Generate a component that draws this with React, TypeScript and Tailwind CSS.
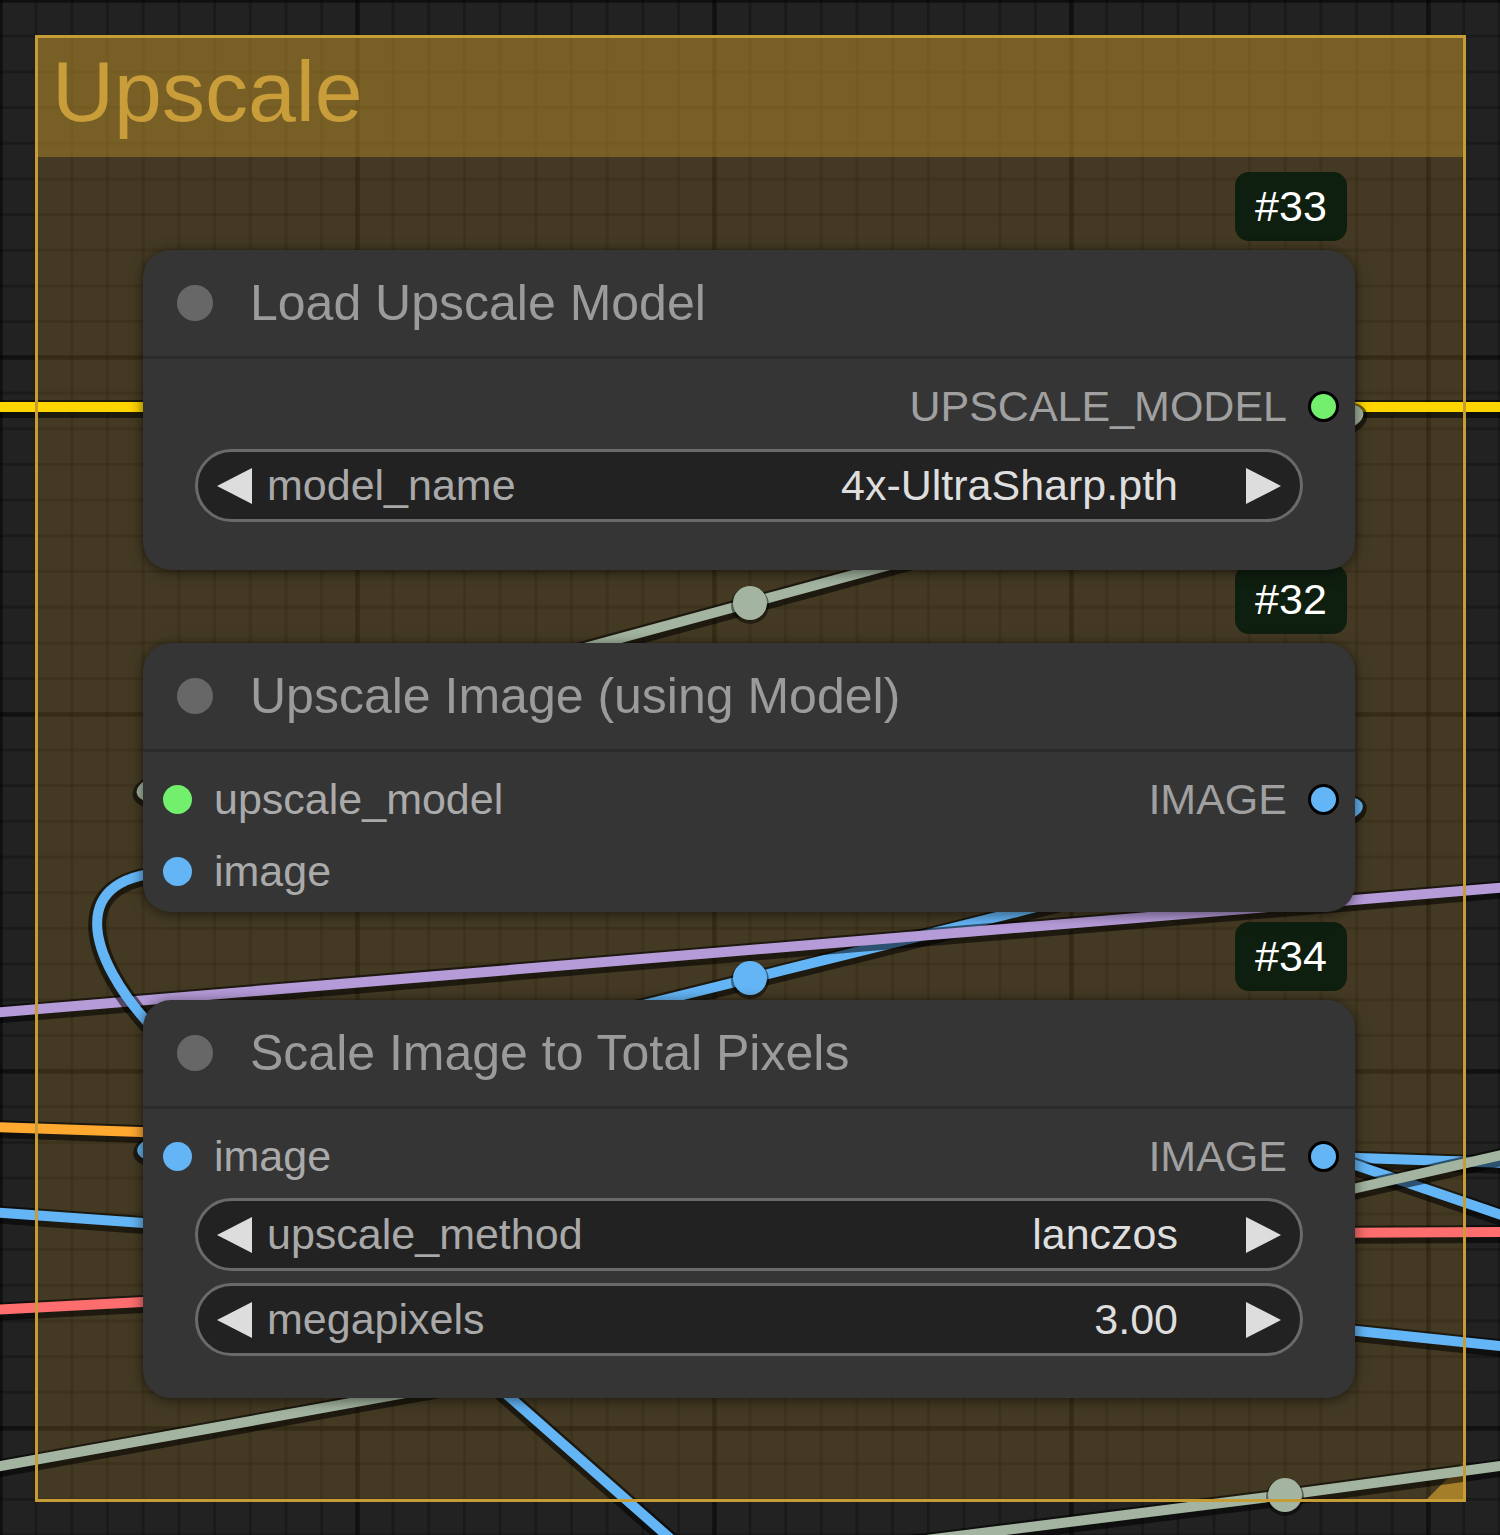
import React from "react";

type Slot = { label: string; dot: string };
type Row = { input?: Slot; output?: Slot };
type Widget = { label: string; value: string };
type GraphNode = {
  id: number;
  title: string;
  pos: string;
  height: string;
  rows: Row[];
  widgetGap: string;
  widgets: Widget[];
};

const nodes: GraphNode[] = [
  {
    id: 33,
    title: "Load Upscale Model",
    pos: "top-[250px]",
    height: "h-[320px]",
    rows: [{ output: { label: "UPSCALE_MODEL", dot: "bg-[#72ef6c]" } }],
    widgetGap: "mt-[7px]",
    widgets: [{ label: "model_name", value: "4x-UltraSharp.pth" }],
  },
  {
    id: 32,
    title: "Upscale Image (using Model)",
    pos: "top-[643px]",
    height: "h-[269px]",
    rows: [
      {
        input: { label: "upscale_model", dot: "bg-[#72ef6c]" },
        output: { label: "IMAGE", dot: "bg-[#64b5f6]" },
      },
      { input: { label: "image", dot: "bg-[#64b5f6]" } },
    ],
    widgetGap: "mt-[6px]",
    widgets: [],
  },
  {
    id: 34,
    title: "Scale Image to Total Pixels",
    pos: "top-[1000px]",
    height: "h-[398px]",
    rows: [
      {
        input: { label: "image", dot: "bg-[#64b5f6]" },
        output: { label: "IMAGE", dot: "bg-[#64b5f6]" },
      },
    ],
    widgetGap: "mt-[6px]",
    widgets: [
      { label: "upscale_method", value: "lanczos" },
      { label: "megapixels", value: "3.00" },
    ],
  },
];

const YELLOW = "#ffd500";
const ORANGE = "#ffa931";
const RED = "#ff6e6e";
const BLUE = "#64b5f6";
const PURPLE = "#b69bd9";
const DEFAULT_LINK = "#a3b5a0";

function Link({ d, color }: { d: string; color: string }) {
  return (
    <g fill="none">
      <path d={d} stroke="rgba(0,0,0,0.55)" strokeWidth={18} transform="translate(0,2)" />
      <path d={d} stroke={color} strokeWidth={10} />
    </g>
  );
}

function MidDot({ cx, cy, color }: { cx: number; cy: number; color: string }) {
  return (
    <g>
      <circle cx={cx} cy={cy + 2} r={19} fill="rgba(0,0,0,0.45)" />
      <circle cx={cx} cy={cy} r={17} fill={color} />
    </g>
  );
}

function Links() {
  return (
    <svg
      className="absolute left-0 top-0"
      width={1500}
      height={1535}
      viewBox="0 0 1500 1535"
    >
      <Link d="M -10 407 L 1510 407" color={YELLOW} />
      <Link d="M -10 1127 L 200 1134" color={ORANGE} />
      <Link d="M -10 1310 L 200 1299" color={RED} />
      <Link d="M -10 1212 L 200 1227" color={BLUE} />
      <Link d="M 1300 1156 L 1510 1163" color={BLUE} />
      <Link d="M 1300 1146 L 1510 1218" color={BLUE} />
      <Link d="M 1300 1201 L 1510 1153" color={DEFAULT_LINK} />
      <Link d="M 1300 1233 L 1510 1232" color={RED} />
      <Link d="M 1300 1325 L 1510 1347" color={BLUE} />
      <Link d="M -10 1468 L 700 1340" color={DEFAULT_LINK} />

      {/* IMAGE -> image */}
      <Link d="M 1323 800 C 1623 800, -123 1157, 177 1157" color={BLUE} />
      <MidDot cx={750} cy={978} color={BLUE} />

      {/* UPSCALE_MODEL -> upscale_model */}
      <Link d="M 1323 407 C 1626 407, -126 799, 177 799" color={DEFAULT_LINK} />
      <MidDot cx={750} cy={603} color={DEFAULT_LINK} />

      <Link d="M -10 1013 L 1510 887" color={PURPLE} />

      {/* image input of the upscale node, fed from below */}
      <Link
        d="M 177 872 C 60 872, 90 960, 150 1025 C 230 1110, 420 1320, 513 1400 L 740 1600"
        color={BLUE}
      />

      <Link d="M 790 1557 L 1285 1495 L 1515 1464" color={DEFAULT_LINK} />
      <MidDot cx={1285} cy={1495} color={DEFAULT_LINK} />
    </svg>
  );
}

function Arrow({ dir }: { dir: "left" | "right" }) {
  return (
    <svg width={35} height={36} viewBox="0 0 35 36" className="shrink-0">
      <polygon
        points={dir === "left" ? "35,0 35,36 0,18" : "0,0 0,36 35,18"}
        fill="#dddddd"
      />
    </svg>
  );
}

function Node({ node }: { node: GraphNode }) {
  return (
    <div className={`absolute left-[143px] w-[1212px] ${node.pos}`}>
      <div className="absolute right-[8px] top-[-78px] flex h-[69px] w-[112px] items-center justify-center rounded-[14px] bg-[#0f1f0f] text-[43px] leading-none text-white">
        #{node.id}
      </div>
      <div
        className={`relative z-10 flex flex-col rounded-[28px] bg-[#353535] shadow-[0_2px_14px_rgba(0,0,0,0.55)] ${node.height}`}
      >
        <div className="flex h-[109px] shrink-0 items-center border-b-[3px] border-[#2b2b2b] pl-[34px]">
          <span className="h-[36px] w-[36px] shrink-0 rounded-full bg-[#676767]" />
          <span className="ml-[37px] whitespace-nowrap text-[50px] leading-none text-[#9b9b9b]">
            {node.title}
          </span>
        </div>
        <div className="flex flex-col pt-[11px]">
          {node.rows.map((row, i) => (
            <div key={i} className="flex h-[72px] items-center justify-between pl-[20px] pr-[16px]">
              {row.input ? (
                <div className="flex items-center">
                  <span className={`h-[29px] w-[29px] rounded-full ${row.input.dot}`} />
                  <span className="ml-[22px] text-[43px] leading-none text-[#aaaaaa]">
                    {row.input.label}
                  </span>
                </div>
              ) : (
                <div />
              )}
              {row.output && (
                <div className="flex items-center">
                  <span className="text-[43px] leading-none text-[#a0a0a0]">
                    {row.output.label}
                  </span>
                  <span
                    className={`ml-[21px] h-[31px] w-[31px] rounded-full border-[3px] border-black ${row.output.dot}`}
                  />
                </div>
              )}
            </div>
          ))}
        </div>
        {node.widgets.length > 0 && (
          <div className={`flex flex-col gap-[12px] px-[52px] ${node.widgetGap}`}>
            {node.widgets.map((w) => (
              <div
                key={w.label}
                className="flex h-[73px] items-center rounded-full border-[3px] border-[#6a6a6a] bg-[#222222] px-[19px] text-[43px] leading-none"
              >
                <Arrow dir="left" />
                <span className="ml-[15px] flex-1 text-[#a9a9a9]">{w.label}</span>
                <span className="text-[#dedede]">{w.value}</span>
                <span className="ml-[68px] flex">
                  <Arrow dir="right" />
                </span>
              </div>
            ))}
          </div>
        )}
      </div>
    </div>
  );
}

export default function App() {
  return (
    <div className="relative h-[1535px] w-[1500px] overflow-hidden bg-[#222222] bg-[image:linear-gradient(to_right,rgba(0,0,0,0.38)_5px,transparent_5px),linear-gradient(to_bottom,rgba(0,0,0,0.38)_5px,transparent_5px),linear-gradient(to_right,rgba(0,0,0,0.24)_3px,transparent_3px),linear-gradient(to_bottom,rgba(0,0,0,0.24)_3px,transparent_3px)] bg-[size:357px_357px,357px_357px,35.7px_35.7px,35.7px_35.7px] bg-[position:-2px_-2px,-2px_-2px,-1px_-1px,-1px_-1px] font-['Liberation_Sans',Arial,sans-serif]">
      {/* group background, title and resize handle */}
      <div className="absolute left-[35px] top-[35px] flex h-[1467px] w-[1431px] flex-col p-[3px]">
        <div className="h-[119px] shrink-0 bg-[rgba(181,139,42,0.58)] pl-[14px] pt-[10px] text-[86px] leading-none text-[#c89d3a]">
          Upscale
        </div>
        <div className="relative flex-1 bg-[rgba(181,139,42,0.23)]">
          <svg width={36} height={36} viewBox="0 0 36 36" className="absolute bottom-0 right-0">
            <polygon points="36,0 36,36 0,36" fill="#b58b2a" opacity={0.85} />
          </svg>
        </div>
      </div>

      <Links />

      {/* group outline */}
      <div className="absolute left-[35px] top-[35px] h-[1467px] w-[1431px] border-[3px] border-[#c69c36]" />

      {nodes.map((n) => (
        <Node key={n.id} node={n} />
      ))}
    </div>
  );
}
